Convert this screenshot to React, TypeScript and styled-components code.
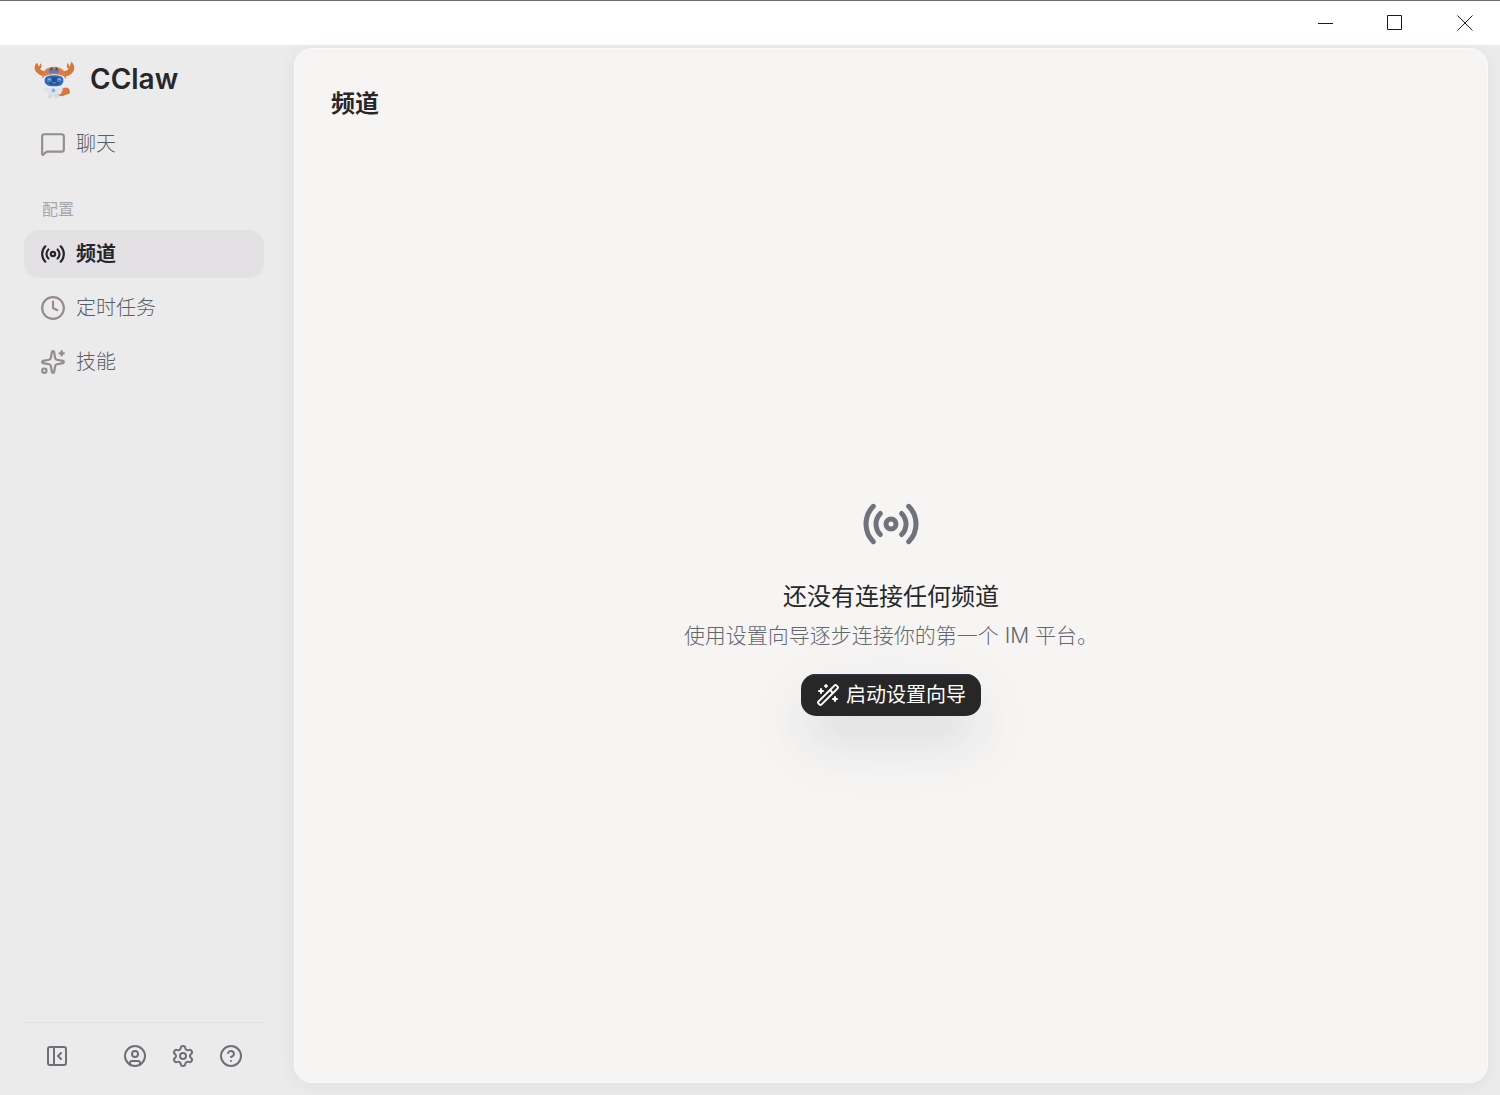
import React from 'react';
import styled, { createGlobalStyle } from 'styled-components';
import {
  CircleQuestionMark,
  CircleUser,
  Clock,
  MessageSquare,
  PanelLeftClose,
  Radio,
  Settings,
  Sparkles,
  WandSparkles,
} from 'lucide-react';

const GlobalStyle = createGlobalStyle`
  *, *::before, *::after { box-sizing: border-box; }
  body {
    margin: 0;
    background: #ebebeb;
    color: #27272a;
    font-family: Inter, "Noto Sans CJK SC", sans-serif;
  }
  button { font: inherit; color: inherit; border: 0; background: none; padding: 0; cursor: pointer; }
  svg { display: block; flex: none; }
`;

const Window = styled.div`
  display: flex;
  flex-direction: column;
  min-height: 100vh;
`;

const TitleBar = styled.header`
  display: flex;
  justify-content: flex-end;
  height: 45px;
  background: #fff;
  border-top: 1px solid #6d6c78;
`;

const WindowButton = styled.button`
  display: flex;
  align-items: center;
  justify-content: center;
  width: 70px;
  color: #1c1c1c;
`;

const Shell = styled.div`
  display: flex;
  flex: 1;
`;

const Sidebar = styled.aside`
  display: flex;
  flex-direction: column;
  width: 294px;
  padding: 12px 30px 15px 24px;
`;

const Brand = styled.div`
  display: flex;
  align-items: center;
  gap: 12px;
  height: 44px;
  padding-left: 6px;
  margin-bottom: 19px;
  font-size: 28px;
  font-weight: 600;
  line-height: 36px;
`;

const Nav = styled.nav`
  display: flex;
  flex-direction: column;
  gap: 6px;
  flex: 1;
`;

const NavItem = styled.button<{ $active?: boolean }>`
  display: flex;
  align-items: center;
  gap: 10px;
  height: 48px;
  padding: 0 16px;
  border-radius: 15px;
  background: ${(p) => (p.$active ? '#e3e1e4' : 'transparent')};
  color: ${(p) => (p.$active ? '#27272a' : '#5a5f67')};
  font-size: 20px;
  font-weight: ${(p) => (p.$active ? 700 : 300)};
  line-height: 30px;

  svg { color: ${(p) => (p.$active ? '#27272a' : '#958b90')}; }
`;

const SectionLabel = styled.h2`
  margin: 23px 0 3px;
  padding: 0 18px;
  color: #a3a7aa;
  font-size: 16px;
  font-weight: 400;
  line-height: 24px;
`;

const SidebarFooter = styled.div`
  display: flex;
  justify-content: space-between;
  padding: 9px 9px 0;
  border-top: 1px solid #e0e0e1;
`;

const FooterGroup = styled.div`
  display: flex;
`;

const IconButton = styled.button`
  display: flex;
  align-items: center;
  justify-content: center;
  width: 48px;
  height: 48px;
  color: #6f6f78;
`;

const Panel = styled.main`
  display: flex;
  flex-direction: column;
  flex: 1;
  margin: 3px 12px 12px 0;
  padding: 37px 36px 0;
  background: #f6f5f4;
  border: 1px solid #fafafa;
  border-radius: 18px;
  box-shadow: 0 3px 18px rgba(40, 40, 50, 0.05);
`;

const PageTitle = styled.h1`
  margin: 0;
  font-size: 24px;
  font-weight: 700;
  line-height: 36px;
`;

const EmptyState = styled.section`
  display: flex;
  flex: 1;
  flex-direction: column;
  align-items: center;
  justify-content: center;
  padding-top: 6px;
  text-align: center;

  > svg { color: #70737b; }
`;

const EmptyTitle = styled.h2`
  margin: 24px 0 4px;
  font-size: 24px;
  font-weight: 400;
  line-height: 38px;
`;

const EmptyText = styled.p`
  margin: 0 0 22px;
  color: #62676e;
  font-size: 21px;
  font-weight: 300;
  line-height: 32px;
`;

const PrimaryButton = styled.button`
  display: flex;
  align-items: center;
  gap: 6px;
  height: 42px;
  padding: 0 15px;
  border-radius: 15px;
  background: #272727;
  color: #fff;
  font-size: 20px;
  font-weight: 400;
  line-height: 30px;
  box-shadow:
    inset 0 1px 0 #34344a,
    0 27px 42px -6px rgba(70, 60, 85, 0.09),
    0 24px 72px rgba(70, 70, 80, 0.08);
`;

const MinimizeGlyph = () => (
  <svg width="16" height="16" stroke="currentColor" aria-hidden="true">
    <path d="M1 8.5h15" />
  </svg>
);

const MaximizeGlyph = () => (
  <svg width="16" height="16" fill="none" stroke="currentColor" aria-hidden="true">
    <path d="M.5.5h14v14H.5z" />
  </svg>
);

const CloseGlyph = () => (
  <svg width="16" height="16" stroke="currentColor" aria-hidden="true">
    <path d="m.5.5 15 15M15.5.5l-15 15" />
  </svg>
);

const CrabLogo = () => (
  <svg width="48" height="44" viewBox="0 0 144 132" aria-hidden="true">
    <path
      d="M21 17C12 24 12 36 19 45c7 9 20 14 34 14l8-17c-13 3-26 0-31-6 6-4 6-11 2-17l-5 10z"
      fill="#d8773c"
    />
    <path
      d="M124 14c10 7 11 21 5 31-7 10-20 15-35 14l-9-17c13 3 26 0 31-6-7-4-7-12-2-19l4 13z"
      fill="#d8773c"
    />
    <path d="M38 66c-4-21 10-37 34-37s39 16 35 37z" fill="#d98045" />
    <path d="M54 40q17-9 35 0l-4 9H59z" fill="#677ba5" />
    <path d="M61 32h6v8h-6zM77 32h6v8h-6z" fill="#3a4c79" />
    <path d="M44 57q28-11 56 0 9 8 5 20-4 11-14 13-19 4-38 0-11-3-14-13-4-12 5-20z" fill="#e5edf7" />
    <path d="M48 59q24-8 48 0 7 7 4 16-4 10-11 11-17 3-34 0-9-2-11-11-3-9 4-16z" fill="#3468b4" />
    <path d="M56 64q16-6 32 0l2 10-6 8q-12 3-24 0l-6-8z" fill="#244c91" />
    <ellipse cx="58" cy="69" rx="8" ry="7" fill="#3f83cc" />
    <ellipse cx="88" cy="69" rx="8" ry="7" fill="#3f83cc" />
    <path d="M54 68q4-5 8 0M84 68q4-5 8 0" fill="none" stroke="#b7ddfa" strokeWidth="2" />
    <path d="M67 76q6 5 12 0" fill="none" stroke="#7f9bc6" strokeWidth="3" />
    <path d="M82 112c10 3 13-5 14-13 5-12 24-8 24 5 0 9-11 7-16 11-7 5-16 3-22-3z" fill="#d7793f" />
    <path d="M44 90q26 8 52 0l2 11-10 3-5 13H58l-5-13-11-3z" fill="#dde2eb" />
    <path d="M56 112h12l-2 11H53zM73 112h11l4 10H74z" fill="#d3d9e4" />
    <circle cx="70" cy="101" r="7" fill="#b8d4ef" />
    <path d="m66 98 5-2 4 5-6 4z" fill="#5b9bd8" />
  </svg>
);

export default function App() {
  return (
    <>
      <GlobalStyle />
      <Window>
        <TitleBar>
          <WindowButton aria-label="最小化"><MinimizeGlyph /></WindowButton>
          <WindowButton aria-label="最大化"><MaximizeGlyph /></WindowButton>
          <WindowButton aria-label="关闭"><CloseGlyph /></WindowButton>
        </TitleBar>
        <Shell>
          <Sidebar>
            <Brand><CrabLogo />CClaw</Brand>
            <Nav>
              <NavItem><MessageSquare size={26} strokeWidth={2} />聊天</NavItem>
              <SectionLabel>配置</SectionLabel>
              <NavItem $active aria-current="page"><Radio size={26} strokeWidth={2} />频道</NavItem>
              <NavItem><Clock size={26} strokeWidth={2} />定时任务</NavItem>
              <NavItem><Sparkles size={26} strokeWidth={2} />技能</NavItem>
            </Nav>
            <SidebarFooter>
              <IconButton aria-label="收起侧栏"><PanelLeftClose size={24} /></IconButton>
              <FooterGroup>
                <IconButton aria-label="账户"><CircleUser size={24} /></IconButton>
                <IconButton aria-label="设置"><Settings size={24} /></IconButton>
                <IconButton aria-label="帮助"><CircleQuestionMark size={24} /></IconButton>
              </FooterGroup>
            </SidebarFooter>
          </Sidebar>
          <Panel>
            <PageTitle>频道</PageTitle>
            <EmptyState>
              <Radio size={60} />
              <EmptyTitle>还没有连接任何频道</EmptyTitle>
              <EmptyText>使用设置向导逐步连接你的第一个 IM 平台。</EmptyText>
              <PrimaryButton><WandSparkles size={24} />启动设置向导</PrimaryButton>
            </EmptyState>
          </Panel>
        </Shell>
      </Window>
    </>
  );
}
